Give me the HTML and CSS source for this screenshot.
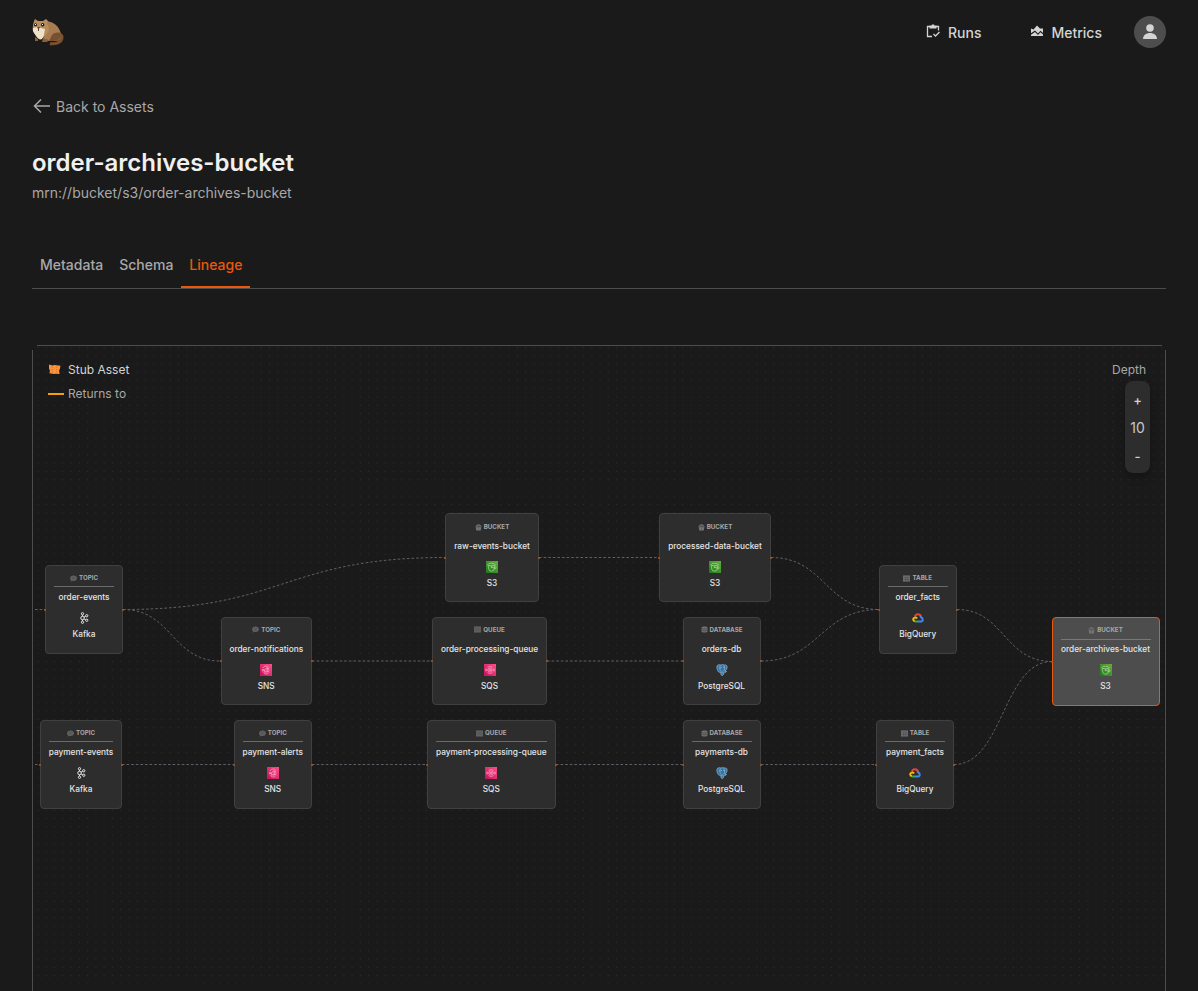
FILE: index.html
```html
<!DOCTYPE html>
<html lang="en">
<head>
<meta charset="utf-8">
<title>order-archives-bucket</title>
<link rel="stylesheet" href="styles.css">
</head>
<body>
<svg class="defs" aria-hidden="true">
  <linearGradient id="gs3" x2="1" y1="1"><stop stop-color="#1b7a1e"/><stop offset="1" stop-color="#67ae3a"/></linearGradient>
  <linearGradient id="gpink" x2="1" y1="1"><stop stop-color="#c4105a"/><stop offset="1" stop-color="#ff4f8b"/></linearGradient>
  <symbol id="topic" viewBox="0 0 16 16"><path fill="#606060" d="M8 1c4.600 0 8 2.600 8 6.300S12.600 13.500 8 13.500c-1 0-2-.1-2.800-.4L1.500 15.500l.8-3.500C.8 10.800 0 9 0 7.300 0 3.600 3.400 1 8 1z"/><path stroke="#444" d="M4 6h8M4 9h6"/></symbol>
  <symbol id="bucket" viewBox="0 0 16 16"><path fill="#777" d="M1.500 6h13L13 15H3z"/><path fill="#606060" stroke="#858585" stroke-width="1.500" d="M2 6C3 0 13 0 14 6"/><path stroke="#444" d="M2 7h12M8 9v4"/></symbol>
  <symbol id="queue" viewBox="0 0 16 16"><path fill="#606060" d="M0 1h16v14H0z"/><path stroke="#4c4c4c" d="M1 6h14M1 10h14"/></symbol>
  <symbol id="database" viewBox="0 0 16 16"><path fill="#707070" d="M1 4c0-4 14-4 14 0v8c0 4-14 4-14 0z"/><path fill="none" stroke="#3b3b3b" stroke-width="1.300" d="M1 5c2 2.500 12 2.500 14 0M1 9c2 2.500 12 2.500 14 0"/></symbol>
  <symbol id="table" viewBox="0 0 16 16"><path fill="#707070" d="M0 1h16v14H0z"/><path stroke="#454545" stroke-width="1.200" d="M1 5h14M1 10h14M6 5v10M11 5v10"/></symbol>
  <symbol id="kafka" viewBox="0 0 24 24"><g fill="none" stroke="#e5e5e5" stroke-width="2"><circle cx="9" cy="12" r="3.500"/><circle cx="9" cy="3.500" r="2.300"/><circle cx="9" cy="20.500" r="2.300"/><circle cx="17.500" cy="7.500" r="2.300"/><circle cx="17.500" cy="16.500" r="2.300"/><path d="M9 6v2.500M9 15.500V18M12 10.300l3.500-2M12 13.700l3.500 2"/></g></symbol>
  <symbol id="sns" viewBox="0 0 24 24"><path fill="url(#gpink)" d="M0 0h24v24H0z"/><g fill="none" stroke="#ffb9d3" stroke-width="1.300"><path d="M6 8c3-5 9-5 12-1M5 11l4 1 5-5v10l-5-4-4 1zM7 17c3 4 8 4 11 0M14 9h4M14 12h5M14 15h4M9 13l1 5"/></g></symbol>
  <symbol id="sqs" viewBox="0 0 24 24"><path fill="url(#gpink)" d="M0 0h24v24H0z"/><g fill="none" stroke="#ffb9d3" stroke-width="1.200"><path d="M7 8c2-4 8-4 10 0M7 16c2 4 8 4 10 0M3 12h5M16 12h5M4 9v6M20 9v6"/><circle cx="12" cy="12" r="4"/><path d="M10 12h4M12 10v4"/></g></symbol>
  <symbol id="s3" viewBox="0 0 24 24"><path fill="url(#gs3)" d="M0 0h24v24H0z"/><g fill="none" stroke="#c5e1b4" stroke-width="1.200"><ellipse cx="11" cy="7" rx="7" ry="2.500"/><path d="M4 7l2 11c1 3 9 3 10 0l2-11M11 12l8 3c2 0 1-3-1-4"/><circle cx="11" cy="12" r="1"/></g></symbol>
  <symbol id="postgres" viewBox="0 0 24 24"><path fill="#2f75a9" stroke="#a9bfce" stroke-width="1.300" d="M4 2c3-1 5 0 6 0 3-1 5-1 7 0 4-1 6 2 5 6-1 3-2 5-4 6l3 1c-1 2-3 2-5 1l-1 5c-1 3-5 2-5 0l-.5-5c-1 1-4 1-5-1C2 11 0 4 4 2z"/><path fill="none" stroke="#c7d5de" d="M9 3c-2 3-2 6 0 10M15 3c3 3 2 8 1 11M9 7h3M15 7h2M12 14v5"/></symbol>
  <symbol id="gcp" viewBox="0 0 24 20"><g fill="none" stroke-width="4"><path stroke="#ea4335" d="M6 7c1.500-6 10-6 12 0"/><path stroke="#4285f4" d="M16 6c2 1 2 2 2.500 3 4 1 4 8-.5 8h-6"/><path stroke="#34a853" d="M12 17H7c-1 0-2-.3-3-1"/><path stroke="#fbbc05" d="M10 11c-2-4-8-1.500-7.500 2 .1 1.500 1 2.500 2.500 3.500"/></g></symbol>
</svg>

<header class="topbar">
  <svg class="logo" viewBox="0 0 34 30">
    <path fill="#7a5130" d="M27 15c4 1 6 3 5.500 6-.5 5-6 8-14 7l1-3c5 1 8 0 8-4z"/>
    <path fill="#a77c50" d="M14 4c8 0 14 5 16 13 1 4-2 7-6 7H12z"/>
    <path fill="#77502f" d="M21 18c3-3 8-3 9-1 1 4-3 7-8 7h-4z"/>
    <path fill="#b88d5e" d="M3 4l1-2 3 2h5l3-2 2 2-1 3c3 4 2 8-1 11-2 2-5 3-7 3-5-3-8-8-5-17z"/>
    <path fill="#eee1c5" d="M2 11l4-1 4 1 4 1c-1 5-1 8-3 10-2 1-4 0-6-3-1-3-4-4-3-8z"/>
    <circle cx="4.500" cy="7.800" r="1.500" fill="#1e1b1a"/><circle cx="11.700" cy="7.800" r="1.700" fill="#1e1b1a"/>
    <path fill="#584638" d="M6 10h3l-1 2v2H7v-2z"/>
    <path fill="#fff" d="M4 7h1v1H4zM11 7h1v1h-1z"/>
    <path fill="#8b6039" d="M4 20l3 2v2H4zM12 21l6 2-2 2h-5z"/>
  </svg>
  <nav class="nav">
    <a class="nav-link runs"><svg viewBox="0 0 14 14"><path fill="none" stroke="#d4d4d4" stroke-width="1.300" d="M4 2.500H1.500v10H6M10 2.500h2.500v4M7.500 10l2 2 4-4"/><path fill="#d4d4d4" d="M3.500 1.500h2l.5-1h2l.5 1h2v3h-7z"/></svg>Runs</a>
    <a class="nav-link metrics"><svg viewBox="0 0 12 12"><path fill="#d4d4d4" d="M0 3.500l2.500 1L6 .5l3 3h3v4.500L9.500 5.800 7 8.500 4 5.500 0 8.300zM0 9.800L4 7l3 3 2.500-2.700L12 9.500V11H0z"/></svg>Metrics</a>
    <span class="avatar"><svg viewBox="0 0 16 16"><circle cx="8" cy="4" r="3.800"/><path d="M1 15c0-8 14-8 14 0z"/></svg></span>
  </nav>
</header>

<main class="page">
  <a class="back"><svg viewBox="0 0 20 16"><path d="M18 8H2.500M9 1.500L2.500 8 9 14.500"/></svg>Back to Assets</a>
  <h1 class="title">order-archives-bucket</h1>
  <p class="mrn">mrn://bucket/s3/order-archives-bucket</p>
  <nav class="tabs"><a class="tab">Metadata</a><a class="tab">Schema</a><a class="tab active">Lineage</a></nav>

  <section class="canvas">
    <svg class="edges" viewBox="32 345 1134 660">
      <g class="wires">
        <path d="M35 609.500H45M35 764.500H40"/>
        <path d="M123 609.500C284 609.500 284 557.500 445 557.500"/>
        <path d="M123 609.500C172 609.500 172 661 220 661"/>
        <path d="M122 764.500H233M312 661H432M312 764.500H427M539 557.500H659M547 661H682M556 764.500H682M761 764.500H876"/>
        <path d="M771 557.500C825 557.500 825 609.500 879 609.500"/>
        <path d="M761 661C820 661 820 609.500 879 609.500"/>
        <path d="M957 609.500C1004 609.500 1004 661.500 1052 661.500"/>
        <path d="M954 764.500C1003 764.500 1003 661.500 1052 661.500"/>
      </g>
    </svg>

    <article class="node lined n-order-events"><header><svg><use href="#topic"/></svg>TOPIC</header><b>order-events</b><svg class="brand"><use href="#kafka"/></svg><span>Kafka</span></article>
    <article class="node lined n-payment-events"><header><svg><use href="#topic"/></svg>TOPIC</header><b>payment-events</b><svg class="brand"><use href="#kafka"/></svg><span>Kafka</span></article>
    <article class="node n-order-notifications"><header><svg><use href="#topic"/></svg>TOPIC</header><b>order-notifications</b><svg class="brand"><use href="#sns"/></svg><span>SNS</span></article>
    <article class="node lined n-payment-alerts"><header><svg><use href="#topic"/></svg>TOPIC</header><b>payment-alerts</b><svg class="brand"><use href="#sns"/></svg><span>SNS</span></article>
    <article class="node n-raw"><header><svg><use href="#bucket"/></svg>BUCKET</header><b>raw-events-bucket</b><svg class="brand"><use href="#s3"/></svg><span>S3</span></article>
    <article class="node n-order-queue"><header><svg><use href="#queue"/></svg>QUEUE</header><b>order-processing-queue</b><svg class="brand"><use href="#sqs"/></svg><span>SQS</span></article>
    <article class="node lined n-payment-queue"><header><svg><use href="#queue"/></svg>QUEUE</header><b>payment-processing-queue</b><svg class="brand"><use href="#sqs"/></svg><span>SQS</span></article>
    <article class="node n-processed"><header><svg><use href="#bucket"/></svg>BUCKET</header><b>processed-data-bucket</b><svg class="brand"><use href="#s3"/></svg><span>S3</span></article>
    <article class="node n-orders-db"><header><svg><use href="#database"/></svg>DATABASE</header><b>orders-db</b><svg class="brand"><use href="#postgres"/></svg><span>PostgreSQL</span></article>
    <article class="node lined n-payments-db"><header><svg><use href="#database"/></svg>DATABASE</header><b>payments-db</b><svg class="brand"><use href="#postgres"/></svg><span>PostgreSQL</span></article>
    <article class="node lined n-order-facts"><header><svg><use href="#table"/></svg>TABLE</header><b>order_facts</b><svg class="brand"><use href="#gcp"/></svg><span>BigQuery</span></article>
    <article class="node lined n-payment-facts"><header><svg><use href="#table"/></svg>TABLE</header><b>payment_facts</b><svg class="brand"><use href="#gcp"/></svg><span>BigQuery</span></article>
    <article class="node lined current n-archive"><header><svg><use href="#bucket"/></svg>BUCKET</header><b>order-archives-bucket</b><svg class="brand"><use href="#s3"/></svg><span>S3</span></article>

    <div class="legend">
      <div class="legend-row stub"><svg viewBox="0 0 14 12"><path fill="#fb923c" d="M1 .5l4 1 2-.5 6.500 1-.5 3-1 2 .5 4-4-.5-2 .5-5-1 .5-3-1-2z"/><path stroke="#b9652a" stroke-dasharray="1 1.500" d="M4.500 3v6M9.500 3v6"/></svg>Stub Asset</div>
      <div class="legend-row"><i class="dash"></i>Returns to</div>
    </div>
    <div class="depth">
      <span class="depth-label">Depth</span>
      <div class="stepper"><button>+</button><output>10</output><button>-</button></div>
    </div>
  </section>
</main>
</body>
</html>
```
FILE: styles.css
```css
* { box-sizing: border-box; }
body { margin: 0; height: 991px; overflow: hidden; background: #1a1a1a; color: #a8a8a8; font-family: Inter, sans-serif; }
.defs { position: absolute; width: 0; height: 0; }
.topbar { height: 64px; padding: 0 32px; display: flex; justify-content: space-between; align-items: center; }
.logo { width: 34px; height: 30px; margin-left: -1px; }
.nav { display: flex; align-items: center; }
.nav-link { display: flex; align-items: center; font-size: 14px; font-weight: 500; line-height: 20px; color: #d4d4d4; padding-top: 2px; }
.nav-link svg { width: 14px; height: 14px; margin: -4px 8px 0 0; }
.metrics { margin: 0 32px 0 50px; }
.nav .metrics svg { width: 12px; height: 12px; }
.avatar { width: 32px; height: 32px; border-radius: 50%; background: #4d4d4d; display: flex; align-items: center; justify-content: center; }
.avatar svg { width: 16px; height: 16px; fill: #d4d4d4; }

.page { padding: 32px 32px 0; }
.back { display: flex; align-items: center; height: 21px; font-size: 14px; }
.back svg { width: 20px; height: 16px; margin: -2px 4px 0 0; fill: none; stroke: #a8a8a8; stroke-width: 1.5; }
.title { margin: 30px 0 0; font-size: 24px; line-height: 32px; font-weight: 600; color: #f0f0f0; }
.mrn { margin: 4px 0 0; font-size: 14px; line-height: 20px; }
.tabs { display: flex; height: 46px; margin-top: 40px; border-bottom: 1px solid #4d4d4d; }
.tab { height: 45px; padding: 12px 8px 0; font-size: 14px; line-height: 20px; font-weight: 500; }
.active { color: #ea580c; border-bottom: 2px solid #ea580c; }

.canvas { position: relative; height: 660px; margin-top: 56px; background: radial-gradient(circle at 4px 4px, #303030 .45px, transparent .8px) 1.9px -1.7px / 8.28px 8.28px; }
.canvas::before { content: ""; position: absolute; top: 0; left: 5px; right: 4px; height: 1px; background: #4d4d4d; }
.canvas::after { content: ""; position: absolute; top: 5px; bottom: 0; left: 0; right: 0; border: solid #4d4d4d; border-width: 0 1px; pointer-events: none; }
.edges { position: absolute; inset: 0; width: 1134px; height: 660px; }
.wires { fill: none; stroke: #5c6067; stroke-width: 1; stroke-dasharray: 2.6 2; }

.node { position: absolute; height: 88.5px; padding: 7px 8px 0; display: flex; flex-direction: column; align-items: center; border: 1px solid #404040; border-radius: 4px; background: #2d2d2d; color: #e5e5e5; font-size: 8.27px; line-height: 12px; white-space: nowrap; }
.node::before, .node::after { content: ""; position: absolute; top: 42.5px; width: 2px; height: 2px; border-radius: 50%; background: #b9501d; }
.node::before { left: -2px; }
.node::after { right: -2px; }
.node header { align-self: stretch; display: flex; justify-content: center; align-items: center; gap: 2px; height: 14px; padding-bottom: 3px; border-bottom: 1px solid transparent; font-size: 6.2px; line-height: 10px; font-weight: 700; color: #a8a8a8; }
.node header svg { width: 7px; height: 7px; }
.lined header { border-color: #6a6a6a; }
.node b { font-weight: 500; margin-top: 4px; }
.brand { width: 12px; height: 12px; margin-top: 9px; }
.node span { font-weight: 500; margin-top: 4px; }
.current { background: #4d4d4d; border-color: #ea580c; }
.current header { border-color: #777; }
.current::after { display: none; }

.n-order-events { left: 13px; top: 220px; width: 78px; }
.n-payment-events { left: 8px; top: 375px; width: 82px; }
.n-order-notifications { left: 188.500px; top: 271.500px; width: 91.500px; }
.n-payment-alerts { left: 201.500px; top: 375px; width: 78.500px; }
.n-raw { left: 413px; top: 168px; width: 94px; padding-top: 8px; }
.n-order-queue { left: 400px; top: 271.500px; width: 115px; }
.n-payment-queue { left: 395px; top: 375px; width: 128.500px; }
.n-processed { left: 627px; top: 168px; width: 112px; padding-top: 8px; }
.n-orders-db { left: 650.500px; top: 271.500px; width: 78px; }
.n-payments-db { left: 650.500px; top: 375px; width: 78px; }
.n-order-facts { left: 847px; top: 220px; width: 77.500px; }
.n-payment-facts { left: 844px; top: 375px; width: 78px; }
.n-archive { left: 1019.500px; top: 272px; width: 108px; height: 89px; }
.n-archive header { height: 15px; padding-bottom: 4px; }
.n-archive b { margin-top: 3px; }

.legend { position: absolute; left: 16px; top: 17px; display: grid; gap: 8px; font-size: 12px; line-height: 16px; }
.legend-row { display: flex; align-items: center; gap: 4px; }
.stub { color: #d4d4d4; gap: 7px; }
.stub svg { width: 13px; height: 11px; margin-top: -1px; }
.dash { width: 16px; height: 2px; margin-top: -1px; background: #f59e0b; }
.depth { position: absolute; right: 16px; top: 17px; display: flex; flex-direction: column; align-items: flex-end; gap: 3px; font-size: 12px; line-height: 16px; }
.depth-label { margin-right: 4px; }
.stepper { width: 25px; height: 92px; border-radius: 8px; background: #2d2d2d; box-shadow: 0 4px 8px #0004; display: flex; flex-direction: column; align-items: center; justify-content: space-between; padding: 11px 0 9px; }
.stepper button { padding: 0; border: 0; background: none; color: #d4d4d4; font: 500 13px/16px Inter, sans-serif; }
.stepper output { font-size: 14px; color: #c8c8c8; }
```
